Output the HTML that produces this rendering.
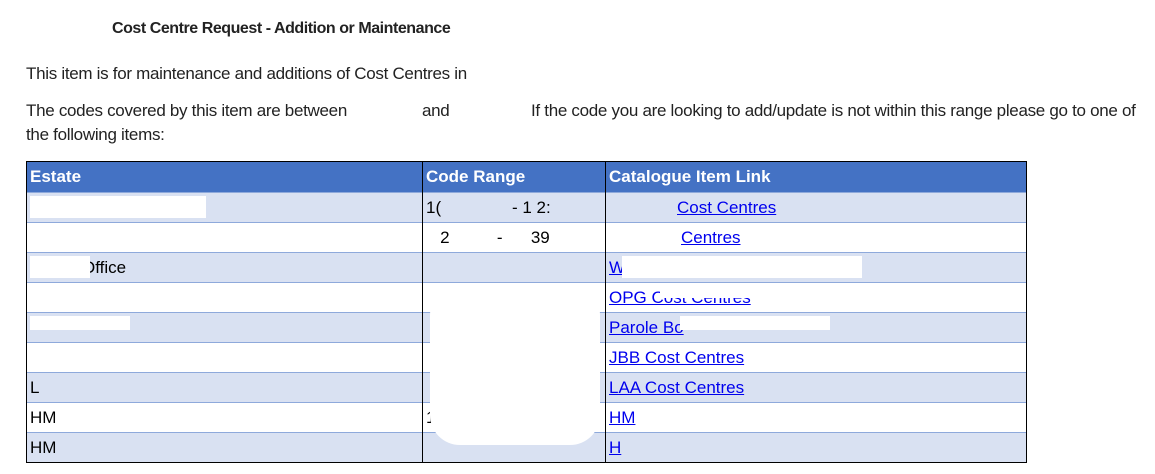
<!DOCTYPE html>
<html><head><style>
body{margin:0;width:1155px;height:474px;background:#fff;font-family:"Liberation Sans",sans-serif;color:#222;position:relative;overflow:hidden}
.t{position:absolute;white-space:nowrap;letter-spacing:-0.3px}
table{position:absolute;left:26px;top:161px;border-collapse:collapse;font-size:17px}
td,th{height:29px;padding:0 0 0 3px;text-align:left;border-top:1px solid #8ea9db;color:#000}
th{background:#4472c4;color:#fff;font-weight:bold;border-top:1px solid #000;height:30px}
tr:nth-child(even) td{background:#d9e1f2}
td:nth-child(1),th:nth-child(1){width:392px;border-left:1px solid #000}
td:nth-child(2),th:nth-child(2){width:179px;border-left:1px solid #000}
td:nth-child(3),th:nth-child(3){width:417px;border-left:1px solid #000;border-right:1px solid #000}
tr:last-child td{border-bottom:1px solid #000}
a{color:#00e;text-decoration:underline}
.w{position:absolute;background:#fff}
</style></head><body>
<div class="t" style="left:112px;top:20px;font-size:16px;font-weight:bold;letter-spacing:-0.45px">Cost Centre Request - Addition or Maintenance</div>
<div class="t" style="left:26px;top:64px;font-size:17px">This item is for maintenance and additions of Cost Centres in</div>
<div class="t" style="left:26px;top:101px;font-size:17px">The codes covered by this item are between</div>
<div class="t" style="left:422px;top:101px;font-size:17px">and</div>
<div class="t" style="left:531px;top:101px;font-size:17px">If the code you are looking to add/update is not within this range please go to one of</div>
<div class="t" style="left:26px;top:125px;font-size:17px">the following items:</div>
<table>
<tr><th>Estate</th><th>Code Range</th><th>Catalogue Item Link</th></tr>
<tr><td>|</td><td>1(&nbsp;&nbsp;&nbsp;&nbsp;&nbsp;&nbsp;&nbsp;&nbsp;&nbsp;&nbsp;&nbsp;&nbsp;&nbsp;&nbsp;&nbsp;- 1 2:</td><td><span style="display:inline-block;width:68px"></span><a>Cost Centres</a></td></tr>
<tr><td></td><td>&nbsp;&nbsp;&nbsp;2&nbsp;&nbsp;&nbsp;&nbsp;&nbsp;&nbsp;&nbsp;&nbsp;&nbsp;&nbsp;-&nbsp;&nbsp;&nbsp;&nbsp;&nbsp;&nbsp;39</td><td><span style="display:inline-block;width:72px"></span><a>Centres</a></td></tr>
<tr><td><span style="display:inline-block;width:52px"></span>Office</td><td></td><td><a>Wale</a></td></tr>
<tr><td></td><td></td><td><a>OPG Cost Centres</a></td></tr>
<tr><td></td><td></td><td><a>Parole Bo</a></td></tr>
<tr><td></td><td></td><td><a>JBB Cost Centres</a></td></tr>
<tr><td>L</td><td></td><td><a>LAA Cost Centres</a></td></tr>
<tr><td>HM</td><td>10</td><td><a>HM</a></td></tr>
<tr><td>HM</td><td></td><td><a>H</a></td></tr>
</table>
<div class="w" style="left:30px;top:196px;width:176px;height:22px"></div>
<div class="w" style="left:30px;top:256px;width:60px;height:22px"></div>
<div class="w" style="left:30px;top:284px;width:240px;height:12px"></div>
<div class="w" style="left:30px;top:316px;width:100px;height:14px"></div>
<div class="w" style="left:622px;top:256px;width:240px;height:22px"></div>
<div class="w" style="left:660px;top:288px;width:120px;height:10px"></div>
<div class="w" style="left:680px;top:316px;width:150px;height:14px"></div>
<div class="w" style="left:430px;top:285px;width:170px;height:160px;border-radius:30px"></div>
</body></html>
